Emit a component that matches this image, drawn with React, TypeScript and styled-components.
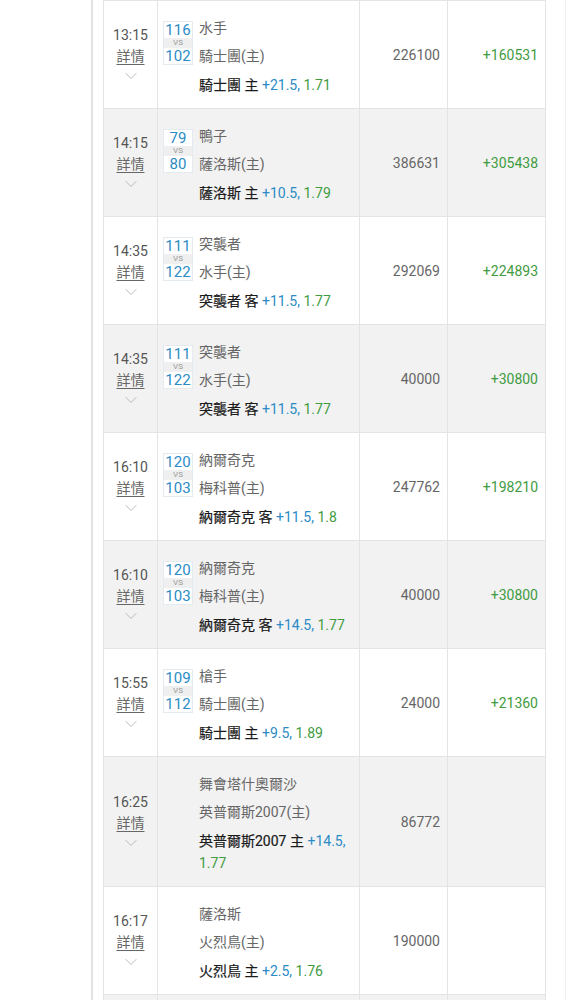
import React from "react";
import styled, { createGlobalStyle } from "styled-components";
import { ChevronDown } from "lucide-react";

const GlobalStyle = createGlobalStyle`
  body {
    margin: 0;
    background: #fff;
    font-family: Roboto, "Noto Sans CJK TC", sans-serif;
  }
`;

const Page = styled.div`
  margin-left: 91px;
  width: 452px;
  padding: 0 10px;
  border-left: 2px solid #e2e2e2;
  border-right: 1px solid #efefef;
`;

const Table = styled.table`
  width: 443px;
  border-collapse: collapse;
  table-layout: fixed;
`;

const Row = styled.tr<{ $shaded: boolean }>`
  background: ${(p) => (p.$shaded ? "#f2f2f2" : "#fff")};
`;

const Cell = styled.td`
  border: 1px solid #e4e4e4;
  vertical-align: middle;
  padding: 0;
`;

const BlankCell = styled(Cell)`
  height: 107px;
`;

const TimeCell = styled(Cell)`
  text-align: center;
  color: #555;
  font-size: 14px;
`;

const TimeText = styled.div`
  line-height: 21px;
`;

const Detail = styled.div`
  line-height: 21px;
  color: #666;
  text-decoration: underline;
  text-underline-offset: 3px;
`;

const Chevron = styled.div`
  display: flex;
  justify-content: center;
  color: #b4b4b4;
  height: 18px;
  margin-top: -1px;
`;

const MatchCell = styled(Cell)`
  padding: 13px 6px 12px 5px;
`;

const MatchBody = styled.div`
  display: flex;
  gap: 6px;
  align-items: flex-start;
`;

const ScoreBox = styled.div<{ $empty: boolean }>`
  flex: 0 0 28px;
  margin-top: 7px;
  border: 1px solid ${(p) => (p.$empty ? "transparent" : "#e3eaf0")};
  text-align: center;
  color: #2b8bc6;
  font-size: 15px;
`;

const ScoreNum = styled.div`
  line-height: 16px;
  background: #fff;
`;

const Vs = styled.div`
  line-height: 10px;
  font-size: 8px;
  color: #999;
  background: #efefef;
`;

const Teams = styled.div`
  flex: 1;
  min-width: 0;
`;

const Team = styled.div`
  line-height: 28px;
  font-size: 14px;
  color: #666;
`;

const BetLine = styled.div`
  margin-top: 4px;
  line-height: 22px;
  font-size: 14px;
  color: #1a1a1a;
  -webkit-text-stroke: 0.2px #1a1a1a;
`;

const Handicap = styled.span`
  color: #2b8bc6;
  -webkit-text-stroke: 0;
`;

const Odds = styled.span`
  color: #3f9b3f;
  -webkit-text-stroke: 0;
`;

const NumCell = styled(Cell)<{ $green?: boolean }>`
  text-align: right;
  padding-right: 7px;
  font-size: 14px;
  color: ${(p) => (p.$green ? "#3f9b3f" : "#666")};
`;

type Bet = {
  time: string;
  score?: [string, string];
  away: string;
  home: string;
  pick: string;
  side: string;
  line: string;
  odds: string;
  amount: string;
  profit: string;
};

const bets: Bet[] = [
  { time: "13:15", score: ["116", "102"], away: "水手", home: "騎士團", pick: "騎士團", side: "主", line: "+21.5", odds: "1.71", amount: "226100", profit: "+160531" },
  { time: "14:15", score: ["79", "80"], away: "鴨子", home: "薩洛斯", pick: "薩洛斯", side: "主", line: "+10.5", odds: "1.79", amount: "386631", profit: "+305438" },
  { time: "14:35", score: ["111", "122"], away: "突襲者", home: "水手", pick: "突襲者", side: "客", line: "+11.5", odds: "1.77", amount: "292069", profit: "+224893" },
  { time: "14:35", score: ["111", "122"], away: "突襲者", home: "水手", pick: "突襲者", side: "客", line: "+11.5", odds: "1.77", amount: "40000", profit: "+30800" },
  { time: "16:10", score: ["120", "103"], away: "納爾奇克", home: "梅科普", pick: "納爾奇克", side: "客", line: "+11.5", odds: "1.8", amount: "247762", profit: "+198210" },
  { time: "16:10", score: ["120", "103"], away: "納爾奇克", home: "梅科普", pick: "納爾奇克", side: "客", line: "+14.5", odds: "1.77", amount: "40000", profit: "+30800" },
  { time: "15:55", score: ["109", "112"], away: "槍手", home: "騎士團", pick: "騎士團", side: "主", line: "+9.5", odds: "1.89", amount: "24000", profit: "+21360" },
  { time: "16:25", away: "舞會塔什奧爾沙", home: "英普爾斯2007", pick: "英普爾斯2007", side: "主", line: "+14.5", odds: "1.77", amount: "86772", profit: "" },
  { time: "16:17", away: "薩洛斯", home: "火烈鳥", pick: "火烈鳥", side: "主", line: "+2.5", odds: "1.76", amount: "190000", profit: "" },
];

const App = () => (
  <Page>
    <GlobalStyle />
    <Table>
      <colgroup>
        <col style={{ width: 54 }} />
        <col style={{ width: 202 }} />
        <col style={{ width: 88 }} />
        <col style={{ width: 98 }} />
      </colgroup>
      <tbody>
        {bets.map((b, i) => (
          <Row key={i} $shaded={i % 2 === 1}>
            <TimeCell>
              <TimeText>{b.time}</TimeText>
              <Detail>詳情</Detail>
              <Chevron>
                <ChevronDown size={20} strokeWidth={1.1} />
              </Chevron>
            </TimeCell>
            <MatchCell>
              <MatchBody>
                <ScoreBox $empty={!b.score}>
                  {b.score && (
                    <>
                      <ScoreNum>{b.score[0]}</ScoreNum>
                      <Vs>VS</Vs>
                      <ScoreNum>{b.score[1]}</ScoreNum>
                    </>
                  )}
                </ScoreBox>
                <Teams>
                  <Team>{b.away}</Team>
                  <Team>{b.home}(主)</Team>
                  <BetLine>
                    {b.pick} {b.side} <Handicap>{b.line},</Handicap>{" "}
                    <Odds>{b.odds}</Odds>
                  </BetLine>
                </Teams>
              </MatchBody>
            </MatchCell>
            <NumCell>{b.amount}</NumCell>
            <NumCell $green>{b.profit}</NumCell>
          </Row>
        ))}
        <Row $shaded>
          <BlankCell />
          <BlankCell />
          <BlankCell />
          <BlankCell />
        </Row>
      </tbody>
    </Table>
  </Page>
);

export default App;
